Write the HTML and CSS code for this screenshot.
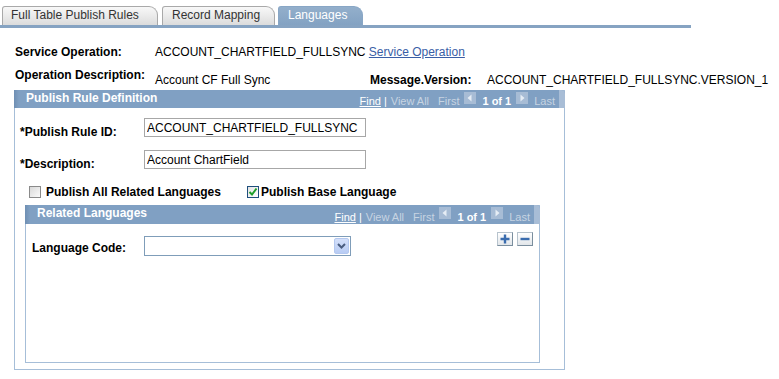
FILE: index.html
```html
<!DOCTYPE html>
<html lang="en">
<head>
    <meta charset="UTF-8">
    <title>Languages</title>

    <link rel="stylesheet" href="styles.css">
</head>
<body>
<div class="tabs">
  <div class="tab is--rules">Full Table Publish Rules</div>
  <div class="tab is--mapping">Record Mapping</div>
  <div class="tab is--active">Languages</div>
</div>
<div class="tab-bar"></div>

<div class="info">
  <div class="info-label">Service Operation:</div>
  <div class="info-value is--wide">ACCOUNT_CHARTFIELD_FULLSYNC <a href="#" class="link">Service Operation</a></div>
  <div class="info-label">Operation Description:</div>
  <div class="info-value is--low">Account CF Full Sync</div>
  <div class="info-label is--low">Message.Version:</div>
  <div class="info-value is--low">ACCOUNT_CHARTFIELD_FULLSYNC.VERSION_1</div>
</div>

<div class="group">
  <div class="group-head">
    <div class="group-title">Publish Rule Definition</div>
    <div class="nav">
      <a href="#" class="nav-find">Find</a>
      <span class="nav-sep">|</span>
      <span>View All</span>
      <span class="nav-first">First</span>
      <span class="nav-icon">
        <svg width="12" height="12" viewBox="0 0 12 12"><path d="M7.5 2.5 L3.5 6 L7.5 9.5 Z" fill="#e6edf5"/></svg>
      </span>
      <span class="nav-count">1 of 1</span>
      <span class="nav-icon">
        <svg width="12" height="12" viewBox="0 0 12 12"><path d="M4.5 2.5 L8.5 6 L4.5 9.5 Z" fill="#e6edf5"/></svg>
      </span>
      <span class="nav-last">Last</span>
      <span class="nav-end"></span>
    </div>
  </div>
  <div class="group-body">
    <div class="field">
      <div class="field-label">*Publish Rule ID:</div>
      <input class="text-input" type="text" value="ACCOUNT_CHARTFIELD_FULLSYNC">
    </div>
    <div class="field">
      <div class="field-label">*Description:</div>
      <input class="text-input" type="text" value="Account ChartField">
    </div>

    <div class="checks">
      <label class="check is--first">
        <span class="box"></span>
        Publish All Related Languages
      </label>
      <label class="check">
        <span class="box is--checked">
          <svg width="10" height="10" viewBox="0 0 10 10"><path d="M1.5 5 L4 7.5 L8.5 1.5" fill="none" stroke="#1f9e2a" stroke-width="2"/></svg>
        </span>
        Publish Base Language
      </label>
    </div>

    <div class="group is--inner">
      <div class="group-head">
        <div class="group-title">Related Languages</div>
        <div class="nav">
          <a href="#" class="nav-find">Find</a>
          <span class="nav-sep">|</span>
          <span>View All</span>
          <span class="nav-first">First</span>
          <span class="nav-icon">
            <svg width="12" height="12" viewBox="0 0 12 12"><path d="M7.5 2.5 L3.5 6 L7.5 9.5 Z" fill="#e6edf5"/></svg>
          </span>
          <span class="nav-count">1 of 1</span>
          <span class="nav-icon">
            <svg width="12" height="12" viewBox="0 0 12 12"><path d="M4.5 2.5 L8.5 6 L4.5 9.5 Z" fill="#e6edf5"/></svg>
          </span>
          <span class="nav-last">Last</span>
          <span class="nav-end"></span>
        </div>
      </div>
      <div class="lang-row">
        <div class="lang-label">Language Code:</div>
        <div class="select">
          <span class="select-btn">
            <svg width="9" height="6" viewBox="0 0 9 6"><path d="M1 1 L4.5 4.5 L8 1" fill="none" stroke="#4a5d80" stroke-width="2"/></svg>
          </span>
        </div>
        <div class="row-btns">
          <span class="row-btn">
            <svg width="10" height="10" viewBox="0 0 10 10"><path d="M5 0.5 V9.5 M0.5 5 H9.5" stroke="#3a6cae" stroke-width="2.4"/></svg>
          </span>
          <span class="row-btn">
            <svg width="10" height="10" viewBox="0 0 10 10"><path d="M0.5 5 H9.5" stroke="#3a6cae" stroke-width="2.4"/></svg>
          </span>
        </div>
      </div>
    </div>
  </div>
</div>
</body>
</html>
```

FILE: styles.css
```css
body {
  margin: 0;
  padding: 0;
  font-family: Arial, "Liberation Sans", sans-serif;
  font-size: 12px;
  line-height: 15px;
  color: #000;
  background: #fff;
}

/* tabs */
.tabs {
  display: flex;
  gap: 4px;
  padding: 6px 0 0 2px;
}

.tab {
  height: 19px;
  box-sizing: border-box;
  padding: 0 0 0 9px;
  border: 1px solid #a9a9a9;
  border-bottom: 0;
  border-radius: 3px 9px 0 0;
  background: linear-gradient(#f8f8f8, #dcdcdc);
  color: #333;
  line-height: 17px;
  white-space: nowrap;
}

.tab.is--rules {
  width: 156px;
  padding-left: 8px;
}

.tab.is--mapping {
  width: 113px;
}

.tab.is--active {
  width: 85px;
  margin-left: -1px;
  border-color: #88a6c5;
  background: linear-gradient(#93afcb, #83a2c2);
  color: #fff;
}

.tab-bar {
  width: 691px;
  height: 3px;
  background: #86a3c2;
}

/* header info */
.info {
  display: grid;
  grid-template-columns: 140px 215px 117px 1fr;
  row-gap: 8px;
  margin: 17px 0 0 15px;
  white-space: nowrap;
}

.info-label {
  font-weight: bold;
}

.info-value.is--wide {
  grid-column: 2 / -1;
}

.is--low {
  padding-top: 5px;
}

.link {
  color: #3a5ea6;
}

/* group boxes */
.group {
  margin: 2px 0 0 14px;
  width: 551px;
  box-sizing: border-box;
  border: 1px solid #a6bed8;
}

.group-head {
  display: flex;
  align-items: flex-end;
  height: 18px;
  margin: -1px -1px 0;
  background: linear-gradient(90deg, #6f8fb3 0, #80a0c3 5px, #80a0c3 100%);
  border-radius: 0 4px 0 0;
  color: #fff;
  white-space: nowrap;
}

.group-title {
  align-self: flex-start;
  padding-left: 12px;
  font-weight: bold;
  line-height: 16px;
}

.nav {
  display: flex;
  align-items: flex-end;
  height: 100%;
  margin-left: auto;
  font-size: 11px;
  line-height: 13px;
  color: #c7d4e2;
}

.nav-find {
  color: #fff;
}

.nav-sep {
  margin: 0 4px 0 3px;
  color: #fff;
}

.nav-first {
  margin-left: 9px;
}

.nav-icon {
  align-self: flex-start;
  display: flex;
  width: 12px;
  height: 12px;
  margin: 2px 6px 0 5px;
  background: #a7bcd5;
}

.nav-count {
  font-weight: bold;
  color: #fff;
}

.nav-count + .nav-icon {
  margin-left: 5px;
}

.nav-end {
  align-self: stretch;
  width: 6px;
  margin-left: 4px;
  background: #a8bdd6;
  border-radius: 0 4px 0 0;
}

.group-body {
  padding: 10px 0 6px;
}

/* form fields */
.field {
  display: flex;
  height: 19px;
}

.field + .field {
  margin-top: 13px;
}

.field-label {
  width: 129px;
  box-sizing: border-box;
  padding: 7px 0 0 5px;
  font-weight: bold;
}

.text-input {
  width: 222px;
  height: 19px;
  box-sizing: border-box;
  margin: 0;
  padding: 0 2px;
  border: 1px solid #a7a7a7;
  font-family: Arial, "Liberation Sans", sans-serif;
  font-size: 12px;
  line-height: 17px;
  color: #000;
}

/* checkboxes */
.checks {
  display: flex;
  align-items: center;
  height: 12px;
  margin-top: 17px;
  padding-left: 14px;
  font-weight: bold;
  line-height: 12px;
}

.check {
  display: flex;
  align-items: center;
  gap: 2px;
  white-space: nowrap;
}

.check.is--first {
  width: 218px;
  gap: 5px;
}

.box {
  display: flex;
  align-items: center;
  justify-content: center;
  width: 12px;
  height: 12px;
  box-sizing: border-box;
  border: 1px solid #8a8a8a;
  background: linear-gradient(135deg, #d9d9d9, #fafafa);
}

.box.is--checked {
  border-color: #1f4f7d;
  background: linear-gradient(135deg, #e4e4e4, #fff);
}

/* inner group */
.group.is--inner {
  width: 515px;
  height: 158px;
  margin: 7px 0 0 10px;
}

.group.is--inner .group-head {
  height: 19px;
}

.group.is--inner .group-title {
  line-height: 17px;
}

.lang-row {
  display: flex;
  padding: 8px 6px 0;
}

.lang-label {
  width: 112px;
  padding-top: 9px;
  font-weight: bold;
}

.select {
  display: flex;
  justify-content: flex-end;
  align-items: center;
  width: 207px;
  height: 20px;
  box-sizing: border-box;
  margin-top: 4px;
  padding-right: 1px;
  border: 1px solid #7f9db9;
  background: #fff;
}

.select-btn {
  display: flex;
  align-items: center;
  justify-content: center;
  width: 15px;
  height: 16px;
  box-sizing: border-box;
  border: 1px solid #b4c8ef;
  border-radius: 2px;
  background: linear-gradient(#d4e0fa, #b8ccf4);
}

.row-btns {
  display: flex;
  gap: 4px;
  margin-left: auto;
}

.row-btn {
  display: flex;
  align-items: center;
  justify-content: center;
  width: 16px;
  height: 14px;
  box-sizing: border-box;
  border: 1px solid #7a8e9e;
  border-top-color: #b7c3cd;
  border-left-color: #b7c3cd;
  background: linear-gradient(#fff, #e2e6ea);
}
```
